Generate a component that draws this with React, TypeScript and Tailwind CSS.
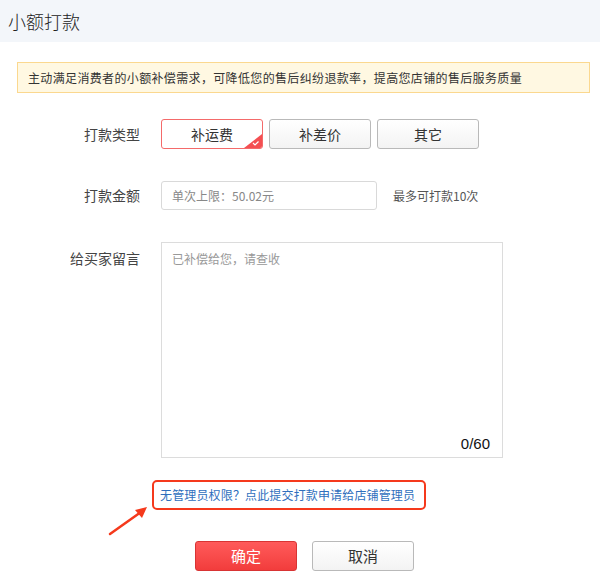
import { useState } from "react";

const types = ["补运费", "补差价", "其它"];

export default function App() {
  const [selected, setSelected] = useState(0);

  return (
    <div className="w-[600px] h-[587px] bg-white text-[#333] font-['Noto_Sans_CJK_SC',sans-serif] overflow-hidden">
      <div className="h-[42px] bg-[#f3f6fa] flex items-center px-[8px]">
        <h1 className="text-[18px] text-[#222] font-light leading-none">小额打款</h1>
      </div>

      <div className="mt-[20px] ml-[17px] w-[573px] h-[31px] border border-[#fbd88f] bg-[#fff8e2] flex items-center px-[10px] text-[12px] tracking-[0.35px] text-[#333]">
        主动满足消费者的小额补偿需求，可降低您的售后纠纷退款率，提高您店铺的售后服务质量
      </div>

      <div className="flex items-center mt-[26px]">
        <div className="w-[140px] text-right text-[14px] text-[#444]">打款类型</div>
        <div className="ml-[21px] flex gap-[6px]">
          {types.map((t, i) => (
            <button
              key={t}
              onClick={() => setSelected(i)}
              className={`relative w-[102px] h-[30px] rounded-[3px] text-[14px] overflow-hidden ${
                i === selected
                  ? "border border-[#f46a6a] bg-white"
                  : "border border-[#b9b9b9] bg-gradient-to-b from-white to-[#f3f3f3]"
              }`}
            >
              {t}
              {i === selected && (
                <span className="absolute right-0 bottom-0 w-[18px] h-[14px]">
                  <svg viewBox="0 0 18 14" className="w-[18px] h-[14px]">
                    <polygon points="18,0 18,14 0,14" fill="#f44f52" />
                    <polyline points="9,9 11,11 14.5,7.5" fill="none" stroke="#fff" strokeWidth="1.2" />
                  </svg>
                </span>
              )}
            </button>
          ))}
        </div>
      </div>

      <div className="flex items-center mt-[32px]">
        <div className="w-[140px] text-right text-[14px] text-[#444]">打款金额</div>
        <input
          className="ml-[21px] w-[216px] h-[29px] border border-[#d9d9d9] rounded-[3px] px-[10px] text-[12px] placeholder:text-[#888] outline-none"
          placeholder="单次上限：50.02元"
        />
        <span className="ml-[16px] text-[12px] text-[#555]">最多可打款10次</span>
      </div>

      <div className="flex mt-[32px]">
        <div className="w-[140px] text-right text-[14px] text-[#444] pt-[6px]">给买家留言</div>
        <div className="ml-[21px] relative w-[342px] h-[216px] border border-[#dcdcdc]">
          <textarea
            className="w-full h-full resize-none px-[10px] pt-[7px] text-[12px] placeholder:text-[#999] outline-none"
            placeholder="已补偿给您，请查收"
          />
          <span className="absolute right-[12px] bottom-[2px] text-[15px] text-[#111] font-['Liberation_Sans',sans-serif]">0/60</span>
        </div>
      </div>

      <div className="relative mt-[22px] ml-[152px] w-[274px] h-[30px] border-[2.5px] border-[#f5391c] rounded-[5px] flex items-center pl-[6px]">
        <a href="#" className="text-[12px] tracking-[0.15px] text-[#2f6fbd] whitespace-nowrap">
          无管理员权限？点此提交打款申请给店铺管理员
        </a>
        <svg className="absolute left-[-46px] top-[20px] w-[42px] h-[34px]" viewBox="0 0 42 34">
          <line x1="2" y1="32" x2="33" y2="10" stroke="#f5391c" strokeWidth="2.5" strokeLinecap="round" />
          <polygon points="39,5 27,8 34,16" fill="#f5391c" />
        </svg>
      </div>

      <div className="flex mt-[31px] ml-[195px] gap-[15px]">
        <button className="w-[102px] h-[30px] rounded-[3px] border border-[#d83434] bg-gradient-to-b from-[#ff5a5a] to-[#f23c3c] text-white text-[15px]">
          确定
        </button>
        <button className="w-[102px] h-[30px] rounded-[3px] border border-[#b9b9b9] bg-gradient-to-b from-white to-[#f3f3f3] text-[15px] text-[#333]">
          取消
        </button>
      </div>
    </div>
  );
}
